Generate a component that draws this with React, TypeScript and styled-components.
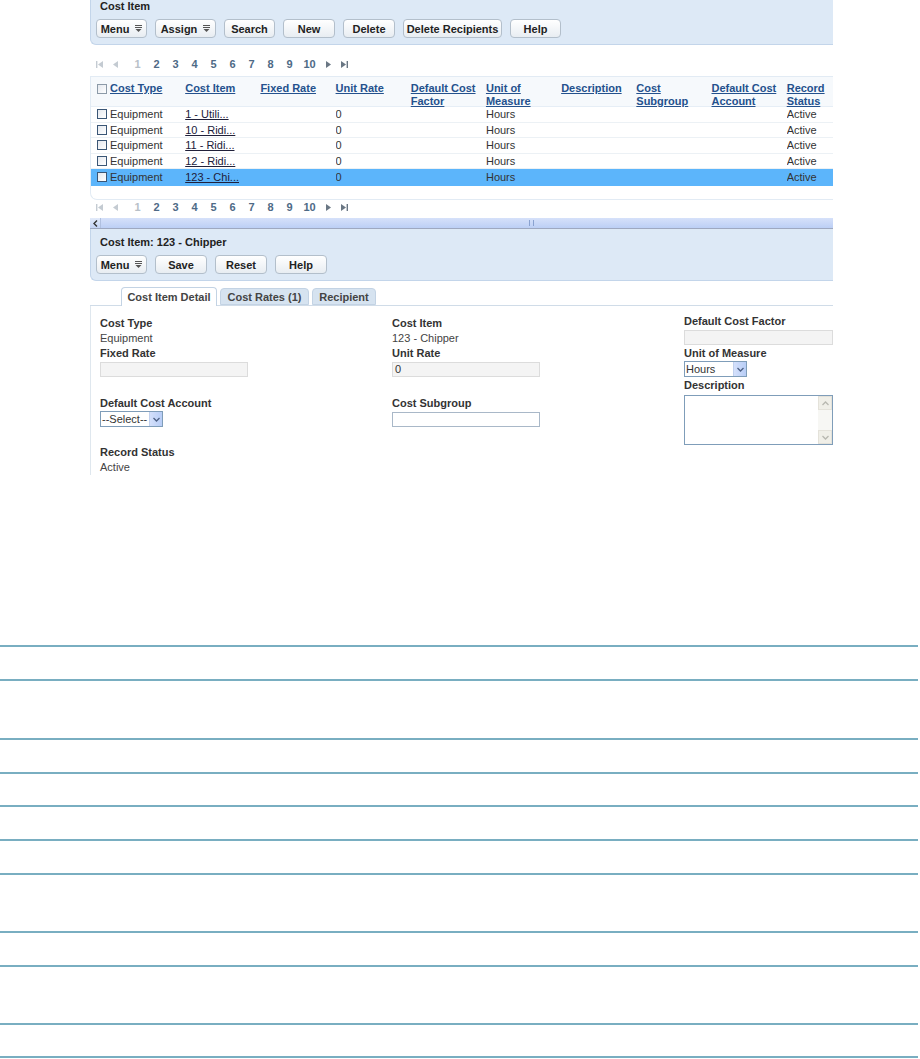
import React from 'react';
import styled, { createGlobalStyle } from 'styled-components';

const GlobalStyle = createGlobalStyle`
  html, body {
    margin: 0;
    padding: 0;
    background: #ffffff;
  }
  body {
    font-family: "Liberation Sans", Arial, sans-serif;
    font-size: 11px;
    color: #333333;
  }
`;

const Page = styled.div`
  width: 920px;
  height: 1059px;
  overflow: hidden;
`;

const Frame = styled.div`
  margin-left: 90px;
  width: 743px;
`;

const Panel = styled.div<{ $top: number }>`
  background: #dde9f6;
  border: 1px solid #c3d5ea;
  border-top: none;
  border-right: none;
  border-radius: 0 0 0 6px;
  padding: ${(p) => p.$top}px 6px 6px 5px;
`;

const PanelTitle = styled.div`
  font-weight: bold;
  line-height: 13px;
  padding-left: 4px;
  color: #222;
`;

const ButtonRow = styled.div`
  display: flex;
  gap: 8px;
  margin-top: 6px;
`;

const Button = styled.button<{ $w: number }>`
  box-sizing: border-box;
  width: ${(p) => p.$w}px;
  height: 19px;
  padding: 0;
  border: 1px solid #b3bfcb;
  border-radius: 4px;
  background: linear-gradient(#ffffff, #e8edf2);
  font-family: "Liberation Sans", Arial, sans-serif;
  font-size: 11px;
  font-weight: bold;
  color: #222;
  display: inline-flex;
  align-items: center;
  justify-content: center;
  gap: 6px;
`;

const MenuGlyph = () => (
  <svg width="7" height="7" viewBox="0 0 7 7">
    <rect x="0" y="0" width="7" height="1" fill="#555" />
    <rect x="0" y="2" width="7" height="1" fill="#555" />
    <polygon points="0.5,4 6.5,4 3.5,7" fill="#555" />
  </svg>
);

const PageNav = styled.div<{ $mt: number; $mb: number }>`
  display: flex;
  align-items: center;
  height: 14px;
  margin: ${(p) => p.$mt}px 0 ${(p) => p.$mb}px 1px;
`;

const NavIcon = styled.span`
  width: 16px;
  display: inline-flex;
  justify-content: center;
  align-items: center;
`;

const NavNum = styled.span<{ $current?: boolean; $w?: number }>`
  width: ${(p) => p.$w ?? 19}px;
  text-align: center;
  font-weight: bold;
  color: ${(p) => (p.$current ? '#b8c0c8' : '#4e6a86')};
`;

const NavGap = styled.span`
  width: 5px;
`;

const FirstIcon = ({ color }: { color: string }) => (
  <svg width="7" height="7" viewBox="0 0 7 7">
    <rect x="0" y="0" width="1.4" height="7" fill={color} />
    <polygon points="7,0 7,7 2,3.5" fill={color} />
  </svg>
);
const PrevIcon = ({ color }: { color: string }) => (
  <svg width="5" height="7" viewBox="0 0 5 7">
    <polygon points="5,0 5,7 0,3.5" fill={color} />
  </svg>
);
const NextIcon = ({ color }: { color: string }) => (
  <svg width="5" height="7" viewBox="0 0 5 7">
    <polygon points="0,0 0,7 5,3.5" fill={color} />
  </svg>
);
const LastIcon = ({ color }: { color: string }) => (
  <svg width="7" height="7" viewBox="0 0 7 7">
    <polygon points="0,0 0,7 5,3.5" fill={color} />
    <rect x="5.6" y="0" width="1.4" height="7" fill={color} />
  </svg>
);

function Pager({ mt, mb }: { mt: number; mb: number }) {
  const nums = [2, 3, 4, 5, 6, 7, 8, 9];
  return (
    <PageNav $mt={mt} $mb={mb}>
      <NavIcon>
        <FirstIcon color="#c4cbd2" />
      </NavIcon>
      <NavIcon>
        <PrevIcon color="#c4cbd2" />
      </NavIcon>
      <NavGap />
      <NavNum $current>1</NavNum>
      {nums.map((n) => (
        <NavNum key={n}>{n}</NavNum>
      ))}
      <NavNum $w={21}>10</NavNum>
      <NavIcon>
        <NextIcon color="#6a7784" />
      </NavIcon>
      <NavIcon>
        <LastIcon color="#6a7784" />
      </NavIcon>
    </PageNav>
  );
}

const Grid = styled.div`
  border: 1px solid #e2ebf4;
  border-right: none;
  border-radius: 0 0 0 7px;
  padding-bottom: 13px;
`;

const cols = '19px repeat(9, 75.2px) 1fr';

const HeaderRow = styled.div`
  display: grid;
  grid-template-columns: ${cols};
  height: 29px;
  background: #f6f9fc;
  border-bottom: 1px solid #e6eef6;
`;

const HeadCell = styled.div`
  padding-top: 5px;
  line-height: 13px;
`;

const HeadLink = styled.a`
  font-weight: bold;
  color: #24518d;
  text-decoration: underline;
`;

const CheckCell = styled.div`
  display: flex;
  align-items: center;
  justify-content: center;
  padding-left: 3px;
`;

const HeadCheckCell = styled(CheckCell)`
  align-items: flex-start;
  padding-top: 7px;
`;

const Box = styled.span<{ $dark?: boolean }>`
  box-sizing: border-box;
  width: 10px;
  height: 10px;
  border: 1px solid ${(p) => (p.$dark ? '#3a5676' : '#8c9aa8')};
  background: linear-gradient(135deg, #e4e8ee, #ffffff);
`;

const Row = styled.div<{ $selected?: boolean }>`
  display: grid;
  grid-template-columns: ${cols};
  height: 15.5px;
  box-sizing: border-box;
  align-items: center;
  background: ${(p) => (p.$selected ? '#5cb5fb' : '#ffffff')};
  border-bottom: 1px solid ${(p) => (p.$selected ? '#5cb5fb' : '#ecf1f5')};
  &:last-child {
    height: 17px;
    border-bottom-width: 2px;
  }
`;

const Cell = styled.div`
  line-height: 14px;
  white-space: nowrap;
  overflow: hidden;
  color: #333;
`;

const CellLink = styled.a`
  color: #20203a;
  text-decoration: underline;
`;

const Scrollbar = styled.div`
  display: flex;
  height: 10px;
  border-bottom: 1px solid #9ea8c0;
`;

const ScrollButton = styled.div`
  width: 10px;
  display: flex;
  align-items: center;
  justify-content: center;
  background: linear-gradient(#e3ebfa, #c3d3f4);
  border-right: 1px solid #b0c0e0;
`;

const ScrollTrack = styled.div`
  flex: 1;
  display: flex;
  align-items: center;
  justify-content: center;
  padding-left: 128px;
  background: linear-gradient(#d6e1fa, #bccff5);
`;

const Grip = styled.span`
  width: 3px;
  height: 6px;
  border-left: 1px solid #8aa2d0;
  border-right: 1px solid #8aa2d0;
`;

const TabBar = styled.div`
  display: flex;
  align-items: flex-end;
  gap: 3px;
  padding-left: 31px;
  margin-top: 7px;
  border-bottom: 1px solid #d0dce8;
  height: 17px;
`;

const Tab = styled.div<{ $active?: boolean; $w: number }>`
  box-sizing: border-box;
  width: ${(p) => p.$w}px;
  height: ${(p) => (p.$active ? 19 : 17)}px;
  margin-bottom: ${(p) => (p.$active ? -1 : 0)}px;
  border: 1px solid #c3d3e4;
  border-bottom: ${(p) => (p.$active ? 'none' : '1px solid #c3d3e4')};
  border-radius: 4px 4px 0 0;
  background: ${(p) => (p.$active ? '#ffffff' : '#d6e3f0')};
  font-weight: bold;
  color: #444;
  display: flex;
  align-items: center;
  justify-content: center;
`;

const FormArea = styled.div`
  display: grid;
  grid-template-columns: 292px 292px 1fr;
  border-left: 1px solid #dfe7ee;
  padding: 11px 0 0 9px;
  height: 158px;
`;

const Column = styled.div<{ $shift?: number }>`
  display: flex;
  flex-direction: column;
  align-items: flex-start;
  margin-top: ${(p) => p.$shift ?? 0}px;
`;

const Label = styled.div<{ $mt?: number }>`
  font-weight: bold;
  line-height: 13px;
  color: #333;
  margin-top: ${(p) => p.$mt ?? 0}px;
`;

const Value = styled.div`
  line-height: 14px;
  margin: 1px 0 2px;
  color: #444;
`;

const TextBox = styled.div<{ $readonly?: boolean; $mt?: number; $w?: number }>`
  box-sizing: border-box;
  width: ${(p) => p.$w ?? 148}px;
  height: 15px;
  margin-top: ${(p) => p.$mt ?? 2}px;
  border: 1px solid ${(p) => (p.$readonly ? '#dcdcdc' : '#a9b8c8')};
  background: ${(p) => (p.$readonly ? '#f4f4f4' : '#ffffff')};
  padding-left: 2px;
  line-height: 13px;
  color: #333;
`;

const SelectBox = styled.div<{ $w: number }>`
  box-sizing: border-box;
  width: ${(p) => p.$w}px;
  height: 16px;
  margin-top: 1px;
  border: 1px solid #7f9db9;
  display: flex;
  background: #fff;
`;

const SelectText = styled.div`
  flex: 1;
  padding-left: 1px;
  line-height: 14px;
  color: #333;
  font-size: 11px;
  white-space: nowrap;
  overflow: hidden;
`;

const SelectArrow = styled.div`
  width: 12px;
  flex: none;
  display: flex;
  align-items: center;
  justify-content: center;
  background: linear-gradient(90deg, #d4e0fb, #b8cdf6);
  border-left: 1px solid #c0d0ee;
`;

const Chevron = ({ up, color = '#4d6185' }: { up?: boolean; color?: string }) => (
  <svg width="7" height="5" viewBox="0 0 7 5">
    <polyline
      points={up ? '0.5,4 3.5,1 6.5,4' : '0.5,1 3.5,4 6.5,1'}
      fill="none"
      stroke={color}
      strokeWidth="1.3"
    />
  </svg>
);

const TextArea = styled.div`
  box-sizing: border-box;
  width: 149px;
  height: 50px;
  margin-top: 3px;
  border: 1px solid #7f9db9;
  display: flex;
  justify-content: flex-end;
  background: #fff;
`;

const AreaScroll = styled.div`
  width: 14px;
  display: flex;
  flex-direction: column;
  justify-content: space-between;
  background: #f7f7f4;
`;

const AreaScrollBtn = styled.div`
  height: 14px;
  display: flex;
  align-items: center;
  justify-content: center;
  background: #f0efe8;
  border: 1px solid #e4e2da;
  box-sizing: border-box;
`;

const Ruled = styled.div`
  margin-top: 170px;
  width: 918px;
  border-top: 2px solid #79aec1;
`;

const RuledRow = styled.div<{ $h: number }>`
  height: ${(p) => p.$h}px;
  box-sizing: border-box;
  border-bottom: 2px solid #79aec1;
`;

const headers: string[][] = [
  ['Cost Type'],
  ['Cost Item'],
  ['Fixed Rate'],
  ['Unit Rate'],
  ['Default Cost', 'Factor'],
  ['Unit of', 'Measure'],
  ['Description'],
  ['Cost', 'Subgroup'],
  ['Default Cost', 'Account'],
  ['Record', 'Status'],
];

const rows = [
  { item: '1 - Utili...', selected: false },
  { item: '10 - Ridi...', selected: false },
  { item: '11 - Ridi...', selected: false },
  { item: '12 - Ridi...', selected: false },
  { item: '123 - Chi...', selected: true },
];

const ruledHeights = [34, 59, 34, 33, 34, 34, 58, 34, 58, 33];

export default function App(): JSX.Element {
  return (
    <Page>
      <GlobalStyle />
      <Frame>
        <Panel $top={0}>
          <PanelTitle>Cost Item</PanelTitle>
          <ButtonRow>
            <Button $w={51}>
              Menu <MenuGlyph />
            </Button>
            <Button $w={61}>
              Assign <MenuGlyph />
            </Button>
            <Button $w={51}>Search</Button>
            <Button $w={52}>New</Button>
            <Button $w={52}>Delete</Button>
            <Button $w={99}>Delete Recipients</Button>
            <Button $w={51}>Help</Button>
          </ButtonRow>
        </Panel>

        <Pager mt={12} mb={5} />

        <Grid>
          <HeaderRow>
            <HeadCheckCell>
              <Box />
            </HeadCheckCell>
            {headers.map((h) => (
              <HeadCell key={h.join(' ')}>
                <HeadLink>
                  {h[0]}
                  {h[1] && <br />}
                  {h[1]}
                </HeadLink>
              </HeadCell>
            ))}
          </HeaderRow>
          {rows.map((r) => (
            <Row key={r.item} $selected={r.selected}>
              <CheckCell>
                <Box $dark />
              </CheckCell>
              <Cell>Equipment</Cell>
              <Cell>
                <CellLink>{r.item}</CellLink>
              </Cell>
              <Cell />
              <Cell>0</Cell>
              <Cell />
              <Cell>Hours</Cell>
              <Cell />
              <Cell />
              <Cell />
              <Cell>Active</Cell>
            </Row>
          ))}
        </Grid>

        <Pager mt={0} mb={4} />

        <Scrollbar>
          <ScrollButton>
            <svg width="5" height="7" viewBox="0 0 5 7">
              <polyline points="4,0.5 1,3.5 4,6.5" fill="none" stroke="#333" strokeWidth="1.4" />
            </svg>
          </ScrollButton>
          <ScrollTrack>
            <Grip />
          </ScrollTrack>
        </Scrollbar>

        <Panel $top={7}>
          <PanelTitle>Cost Item: 123 - Chipper</PanelTitle>
          <ButtonRow>
            <Button $w={51}>
              Menu <MenuGlyph />
            </Button>
            <Button $w={52}>Save</Button>
            <Button $w={52}>Reset</Button>
            <Button $w={52}>Help</Button>
          </ButtonRow>
        </Panel>

        <TabBar>
          <Tab $active $w={96}>
            Cost Item Detail
          </Tab>
          <Tab $w={89}>Cost Rates (1)</Tab>
          <Tab $w={64}>Recipient</Tab>
        </TabBar>

        <FormArea>
          <Column>
            <Label>Cost Type</Label>
            <Value>Equipment</Value>
            <Label>Fixed Rate</Label>
            <TextBox $readonly />
            <Label $mt={20}>Default Cost Account</Label>
            <SelectBox $w={63}>
              <SelectText>--Select--</SelectText>
              <SelectArrow>
                <Chevron />
              </SelectArrow>
            </SelectBox>
            <Label $mt={19}>Record Status</Label>
            <Value>Active</Value>
          </Column>
          <Column>
            <Label>Cost Item</Label>
            <Value>123 - Chipper</Value>
            <Label>Unit Rate</Label>
            <TextBox $readonly>0</TextBox>
            <Label $mt={20}>Cost Subgroup</Label>
            <TextBox $mt={2} />
          </Column>
          <Column $shift={-2}>
            <Label>Default Cost Factor</Label>
            <TextBox $readonly $mt={2} $w={149} />
            <Label $mt={2}>Unit of Measure</Label>
            <SelectBox $w={63}>
              <SelectText>Hours</SelectText>
              <SelectArrow>
                <Chevron />
              </SelectArrow>
            </SelectBox>
            <Label $mt={2}>Description</Label>
            <TextArea>
              <AreaScroll>
                <AreaScrollBtn>
                  <Chevron up color="#b8b8b0" />
                </AreaScrollBtn>
                <AreaScrollBtn>
                  <Chevron color="#b8b8b0" />
                </AreaScrollBtn>
              </AreaScroll>
            </TextArea>
          </Column>
        </FormArea>
      </Frame>

      <Ruled>
        {ruledHeights.map((h, i) => (
          <RuledRow key={i} $h={h} />
        ))}
      </Ruled>
    </Page>
  );
}
